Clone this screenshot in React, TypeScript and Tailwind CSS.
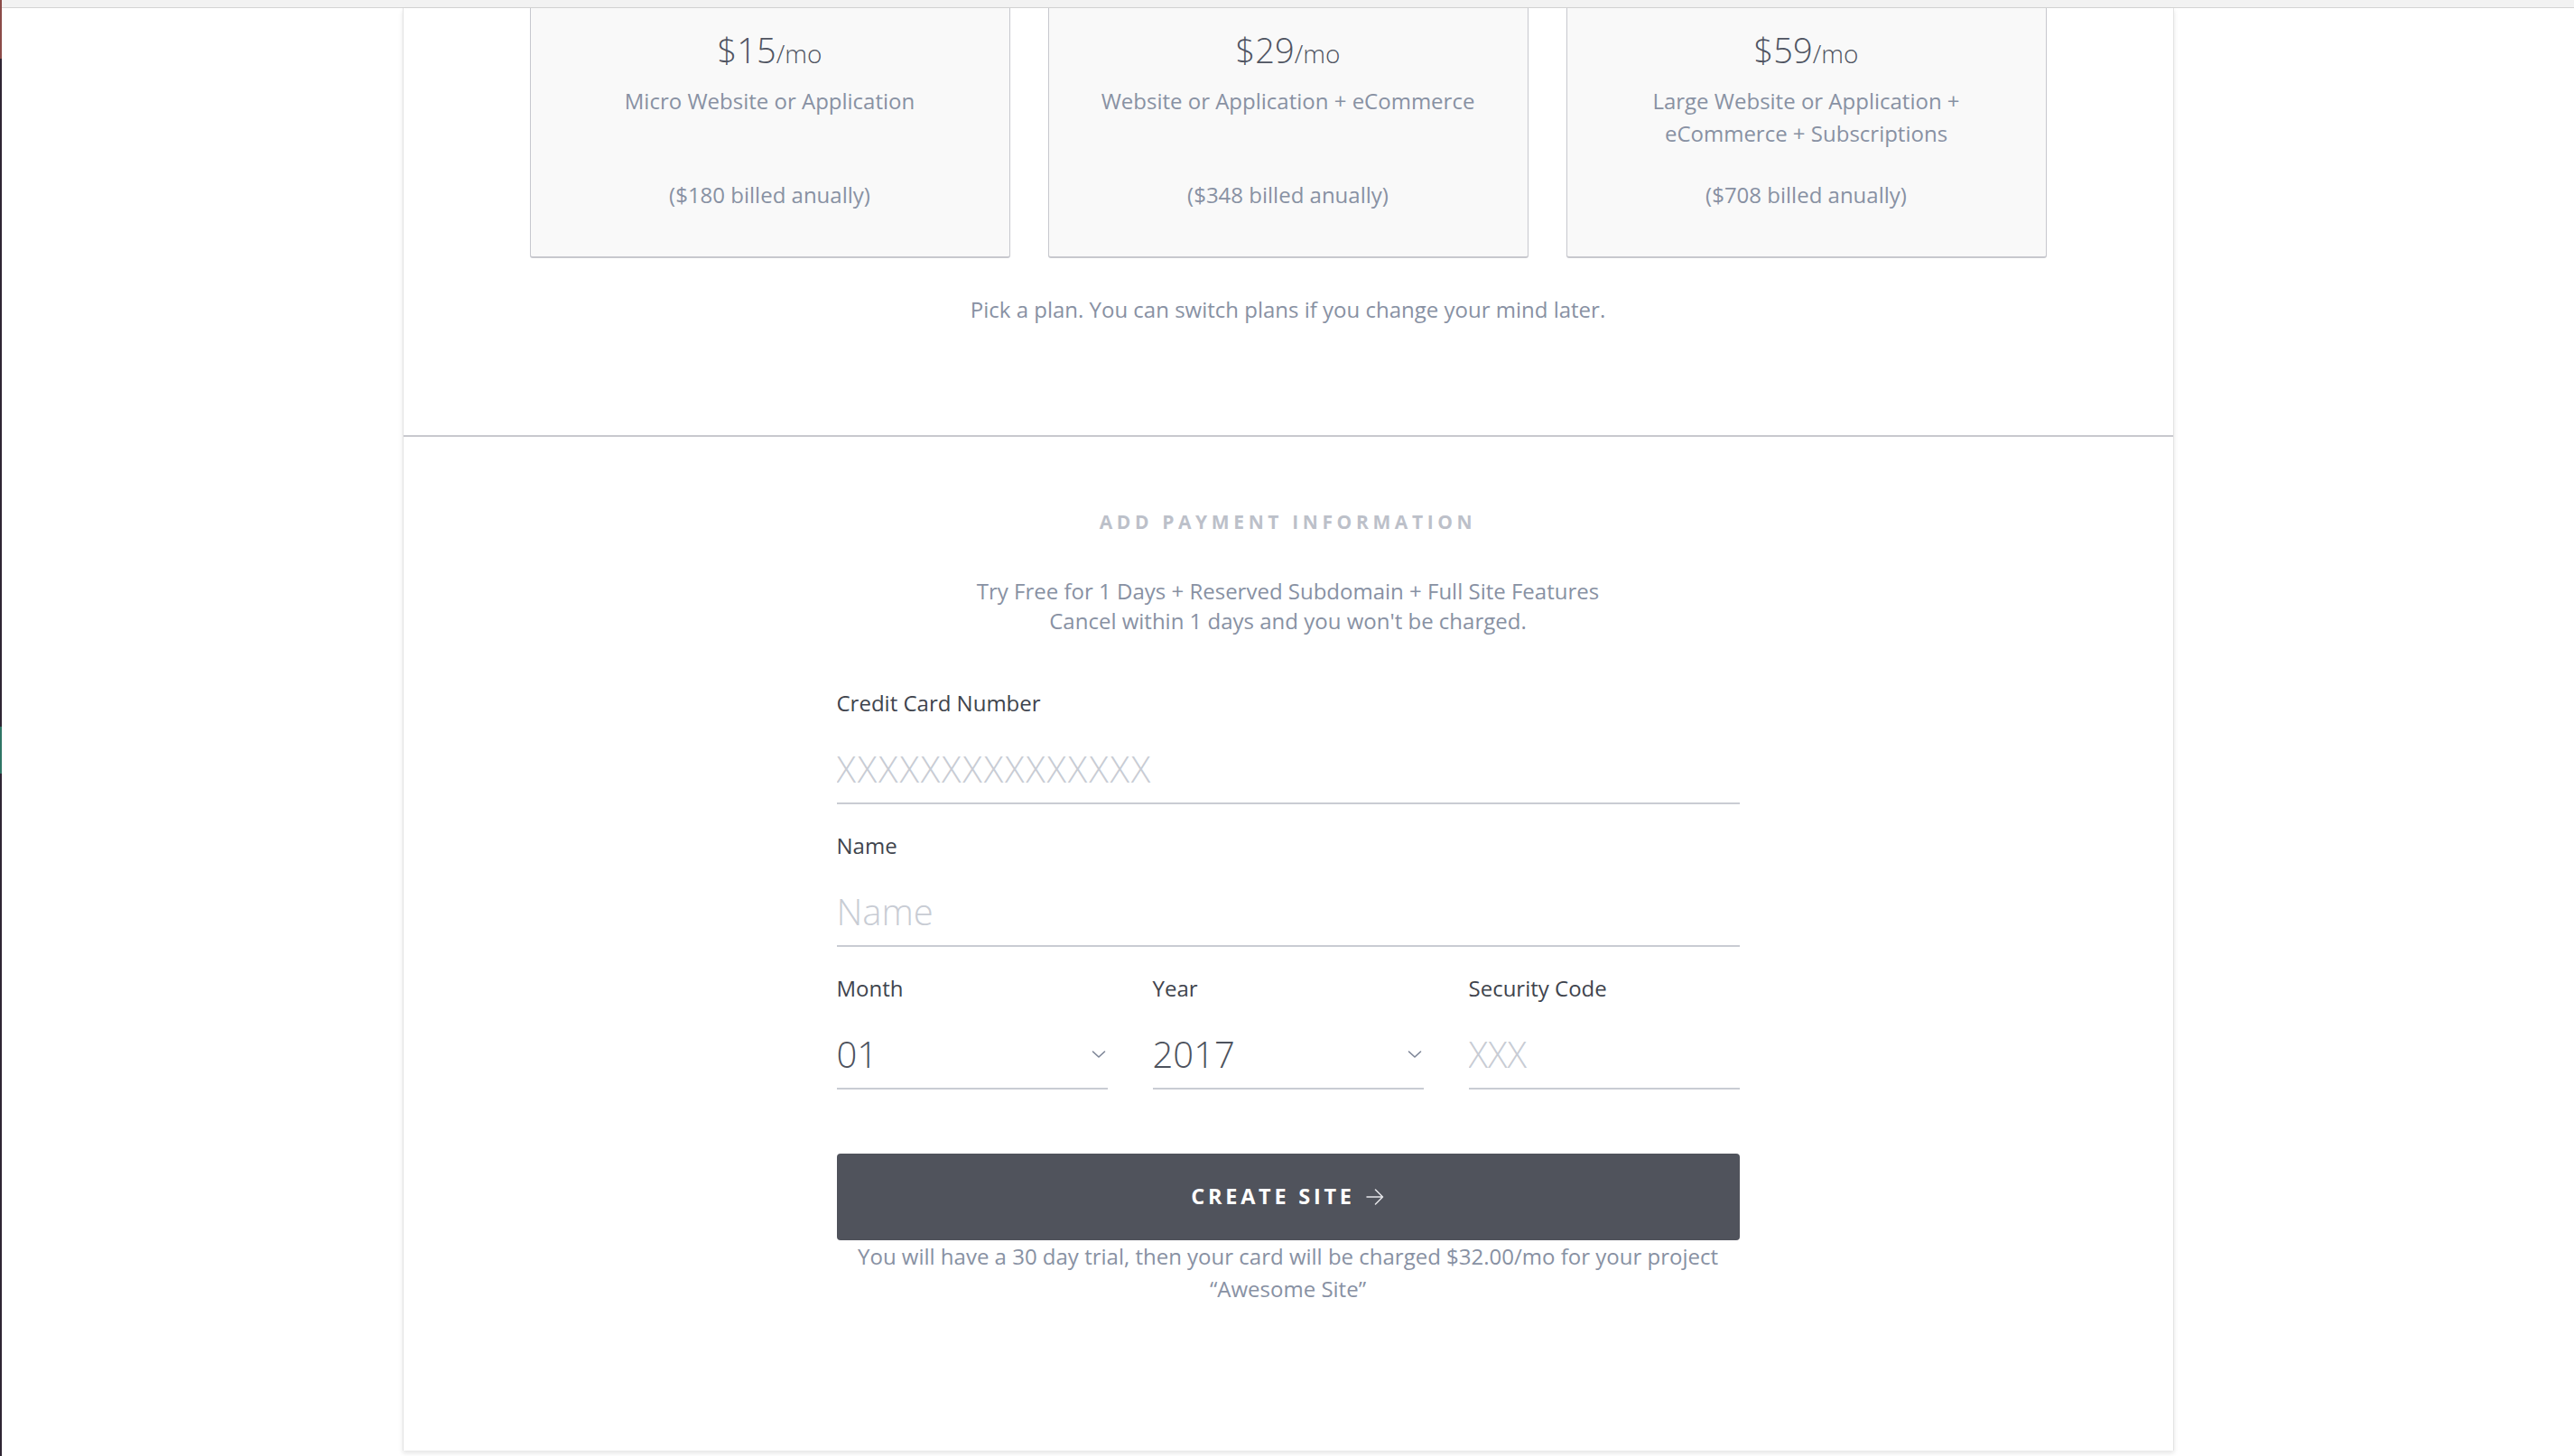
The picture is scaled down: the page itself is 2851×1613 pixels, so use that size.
import React from "react";

const plans = [
  { price: "$15", desc: "Micro Website or Application", billed: "($180 billed anually)" },
  { price: "$29", desc: "Website or Application + eCommerce", billed: "($348 billed anually)" },
  { price: "$59", desc: "Large Website or Application + eCommerce + Subscriptions", billed: "($708 billed anually)" },
];

function Chevron() {
  return (
    <svg width="16" height="10" viewBox="0 0 16 10" className="mr-[2px] shrink-0">
      <path d="M1.5 2 L8 8 L14.5 2" fill="none" stroke="#7c8496" strokeWidth="1.6" strokeLinecap="round" strokeLinejoin="round" />
    </svg>
  );
}

function Field({
  label,
  placeholder,
  value,
  select,
  wide,
}: {
  label: string;
  placeholder?: string;
  value?: string;
  select?: boolean;
  wide?: boolean;
}) {
  return (
    <div className="flex flex-col">
      <div className="text-[24px] leading-[33px] text-[#40444d]">{label}</div>
      <div className="mt-[22px] flex h-[74px] items-center border-b-2 border-[#c9ccd3] pb-[2px]">
        {select ? (
          <div className="flex flex-1 items-center justify-between">
            <span className="text-[40px] font-light leading-[50px] text-[#4d525d]">{value}</span>
            <Chevron />
          </div>
        ) : (
          <input
            className={
              wide
                ? "w-full bg-transparent text-[40px] font-light leading-[50px] tracking-[0.045em] text-[#4d525d] outline-none placeholder:text-[#c8ccd4]"
                : "w-full bg-transparent text-[40px] font-light leading-[50px] text-[#4d525d] outline-none placeholder:text-[#c8ccd4]"
            }
            placeholder={placeholder}
          />
        )}
      </div>
    </div>
  );
}

export default function App() {
  return (
    <div className="flex min-h-screen w-full bg-white" style={{ fontFamily: '"Open Sans", "Noto Sans", sans-serif' }}>
      <div className="flex w-[2px] shrink-0 flex-col">
        <div className="h-[65px] bg-[#8b4b48]" />
        <div className="h-[740px] bg-[#2e2533]" />
        <div className="h-[52px] bg-[#2f7565]" />
        <div className="flex-1 bg-[#2e2533]" />
      </div>
      <div className="flex flex-1 flex-col">
        <div className="h-[9px] border-b border-[#d3d3d3] bg-[#f2f2f2]" />
        <div className="flex justify-center">
          <div className="w-[1962px] border-x border-[#e4e4e4] bg-white shadow-[0_3px_5px_rgba(0,0,0,0.10)]">
            {/* Plans section */}
            <div className="flex flex-col items-center border-b-2 border-[#c8c9ce] px-[140px] pb-[121px]">
              <div className="grid w-full grid-cols-3 gap-[42px]">
                {plans.map((p) => (
                  <div
                    key={p.price}
                    className="flex flex-col items-center rounded-b-[3px] border-x border-b-2 border-[#c7c8ce] bg-[#f9f9f9] px-[20px] pb-[50px] pt-[21px] text-center"
                  >
                    <div className="flex items-baseline leading-[50px] text-[#4f5461]">
                      <span className="text-[38px] font-light">{p.price}</span>
                      <span className="text-[28px] font-light">/mo</span>
                    </div>
                    <div className="mt-[10px] h-[72px] max-w-[430px] text-[24px] leading-[36px] text-[#8891a3]">{p.desc}</div>
                    <div className="mt-[32px] text-[24px] leading-[36px] text-[#8891a3]">{p.billed}</div>
                  </div>
                ))}
              </div>
              <div className="mt-[39px] text-[24px] leading-[36px] text-[#8891a3]">
                Pick a plan. You can switch plans if you change your mind later.
              </div>
            </div>

            {/* Payment section */}
            <div className="flex flex-col items-center pb-[161px] pt-[79px]">
              <div className="text-[21px] font-bold leading-[30px] tracking-[0.22em] text-[#bcc0c9]">ADD PAYMENT INFORMATION</div>
              <div className="mt-[45px] text-center text-[24px] leading-[33px] text-[#8891a3]">
                <div>Try Free for 1 Days + Reserved Subdomain + Full Site Features</div>
                <div>Cancel within 1 days and you won't be charged.</div>
              </div>

              <div className="mt-[58px] flex w-[1000px] flex-col">
                <Field label="Credit Card Number" placeholder="XXXXXXXXXXXXXXX" wide />
                <div className="mt-[29px]">
                  <Field label="Name" placeholder="Name" />
                </div>
                <div className="mt-[29px] grid grid-cols-3 gap-[50px]">
                  <Field label="Month" value="01" select />
                  <Field label="Year" value="2017" select />
                  <Field label="Security Code" placeholder="XXX" />
                </div>

                <button className="mt-[71px] flex h-[96px] items-center justify-center gap-[11px] rounded-[4px] bg-[#50535c] text-white">
                  <span className="text-[23.5px] font-bold tracking-[0.16em]">CREATE SITE</span>
                  <svg width="22" height="20" viewBox="0 0 22 20">
                    <path d="M2 10 H19 M11.5 2 L19.5 10 L11.5 18" fill="none" stroke="#e6e7ea" strokeWidth="1.5" strokeLinecap="round" strokeLinejoin="round" />
                  </svg>
                </button>
                <div className="text-center text-[24px] leading-[36px] text-[#8891a3]">
                  You will have a 30 day trial, then your card will be charged $32.00/mo for your project
                  <br />
                  “Awesome Site”
                </div>
              </div>
            </div>
          </div>
        </div>
      </div>
    </div>
  );
}
